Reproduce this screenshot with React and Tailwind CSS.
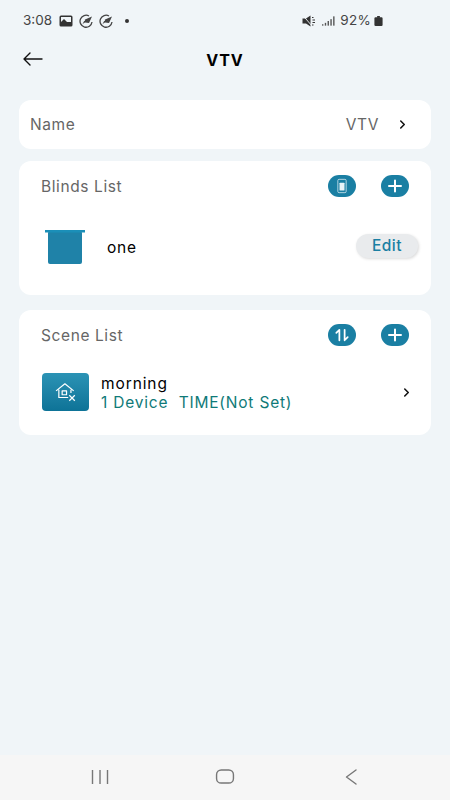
const F = { fontFamily: '"Inter", "Liberation Sans", sans-serif' };

function Chevron({ className }) {
  return (
    <svg viewBox="0 0 8 12" className={className} fill="none" stroke="#111" strokeWidth="1.8" strokeLinecap="round" strokeLinejoin="round">
      <path d="M2 2 L6 6 L2 10" />
    </svg>
  );
}

function Oval({ children }) {
  return (
    <div className="w-[28px] h-[22px] rounded-full bg-[#1a7fa3] flex items-center justify-center shrink-0">
      {children}
    </div>
  );
}

const Plus = () => (
  <Oval>
    <svg viewBox="0 0 16 16" className="w-[16px] h-[16px]" fill="none" stroke="#fff" strokeWidth="2" strokeLinecap="round">
      <path d="M8 2.5 V13.5 M2 8 H14" />
    </svg>
  </Oval>
);

const Remote = () => (
  <Oval>
    <svg viewBox="0 0 12 18" className="w-[10px] h-[16px]" fill="none">
      <rect x="1" y="1" width="10" height="16" rx="1.5" stroke="#cfe6ee" strokeWidth="1" />
      <rect x="3" y="5" width="6" height="9.5" rx="0.8" fill="#e8f4f8" />
    </svg>
  </Oval>
);

const Sort = () => (
  <Oval>
    <svg viewBox="0 0 18 16" className="w-[16px] h-[14px]" fill="none" stroke="#fff" strokeWidth="2" strokeLinecap="round" strokeLinejoin="round">
      <path d="M6 14 V2 L2.5 5.5 M12 2 V14 L15.5 10.5" />
    </svg>
  </Oval>
);

const Rocket = () => (
  <svg viewBox="0 0 14 14" className="w-[14px] h-[14px] ml-[6px]" fill="none">
    <path d="M10 2 A6 6 0 1 0 13 8" stroke="#444" strokeWidth="1.3" />
    <path d="M3.5 10 L6 5.5 L13 2.5 L10 9 L6 8.5 Z" fill="#444" />
    <path d="M2 6.5 H6" stroke="#f0f5f8" strokeWidth="0.8" />
  </svg>
);

export default function App() {
  return (
    <div className="w-[450px] h-[800px] bg-[#f0f5f8] flex flex-col overflow-hidden text-black" style={F}>
      <div className="h-[41px] pl-[23px] pr-[67px] flex items-center justify-between text-[13.5px] text-[#444]">
        <div className="flex items-center">
          <span>3:08</span>
          <svg viewBox="0 0 14 12" className="w-[14px] h-[12px] ml-[7px]">
            <rect x="0.5" y="0.5" width="13" height="11" rx="1.5" fill="#333" />
            <rect x="2" y="2" width="10" height="5" fill="#f0f5f8" />
            <path d="M2 7 L5 4 L8 7 Z" fill="#333" />
          </svg>
          <Rocket />
          <Rocket />
          <div className="w-[4px] h-[4px] rounded-full bg-[#333] ml-[12px]" />
        </div>
        <div className="flex items-center">
          <svg viewBox="0 0 14 12" className="w-[14px] h-[12px]">
            <path d="M0.5 3.5 H4 L8.5 0.5 V11.5 L4 8.5 H0.5 Z" fill="#333" />
            <path d="M1 0.5 L10 11" stroke="#f0f5f8" strokeWidth="0.9" />
            <path d="M10 2.5 L11.5 2.5 M10.5 5 H13 M10.5 7.5 H13 M10 10 H11.5" stroke="#333" strokeWidth="1.1" />
          </svg>
          <svg viewBox="0 0 14 10" className="w-[13px] h-[10px] ml-[6px]" fill="#555">
            <rect x="0" y="8.5" width="1.5" height="1.5" />
            <rect x="3" y="7" width="1.5" height="3" />
            <rect x="6" y="5" width="1.5" height="5" />
            <rect x="9" y="3" width="1.5" height="7" />
            <rect x="12" y="0" width="1.5" height="10" />
          </svg>
          <span className="ml-[5px] tracking-[0.3px]">92%</span>
          <svg viewBox="0 0 9 11" className="w-[9px] h-[10px] ml-[3px]" fill="#333">
            <rect x="0" y="1.5" width="9" height="9.5" rx="1.2" />
            <rect x="3" y="0" width="3" height="2" />
          </svg>
        </div>
      </div>

      <div className="h-[38px] relative flex items-center justify-center">
        <svg viewBox="0 0 20 14" className="absolute left-[23px] top-[11px] w-[20px] h-[14px]" fill="none" stroke="#111" strokeWidth="1.4" strokeLinecap="round" strokeLinejoin="round">
          <path d="M1 7 H19 M7 1 L1 7 L7 13" />
        </svg>
        <span className="font-bold text-[16px] tracking-[1px]">VTV</span>
      </div>

      <div className="flex flex-col px-[19px] pt-[21px] flex-1">
        <div className="h-[49px] bg-white rounded-[12px] flex items-center pl-[11px] pr-[25px] text-[#666] text-[15.5px] tracking-[0.6px]">
          <span>Name</span>
          <span className="ml-auto">VTV</span>
          <Chevron className="w-[7px] h-[11px] ml-[20px]" />
        </div>

        <div className="h-[134px] bg-white rounded-[12px] mt-[12px] flex flex-col pl-[22px] pr-[12px]">
          <div className="flex items-center pt-[14px] pr-[10px]">
            <span className="pt-[2px] leading-[20px] text-[#666] text-[15.5px] tracking-[0.6px]">Blinds List</span>
            <div className="ml-auto flex gap-[25px]">
              <Remote />
              <Plus />
            </div>
          </div>
          <div className="flex items-center mt-[33px]">
            <svg viewBox="0 0 40 34" className="w-[40px] h-[34px] ml-[4px]">
              <rect x="3" y="1" width="34" height="33" rx="2" fill="#1f82a8" />
              <rect x="0" y="0" width="40" height="2.5" fill="#1b8fb8" />
            </svg>
            <span className="ml-[22px] mt-[2px] text-[15.5px] tracking-[0.8px]">one</span>
            <div className="ml-auto mr-[1px] mb-[2px] w-[62px] h-[24px] rounded-full bg-[#e9ebed] shadow-[1px_1px_3px_rgba(0,0,0,0.15)] flex items-center justify-center text-[#1a7fa3] font-medium text-[15.5px] tracking-[0.5px]">
              Edit
            </div>
          </div>
        </div>

        <div className="h-[125px] bg-white rounded-[12px] mt-[15px] flex flex-col pl-[22px] pr-[22px]">
          <div className="flex items-center pt-[14px]">
            <span className="pt-[2px] leading-[20px] text-[#666] text-[15.5px] tracking-[0.6px]">Scene List</span>
            <div className="ml-auto flex gap-[25px]">
              <Sort />
              <Plus />
            </div>
          </div>
          <div className="flex items-center h-[38px] mt-[27px]">
            <div className="w-[47px] h-[38px] ml-[1px] rounded-[4px] bg-gradient-to-b from-[#2b93b5] to-[#0d7397] flex items-center justify-center">
              <svg viewBox="0 0 20 18" className="w-[22px] h-[20px]" fill="none" stroke="#fff" strokeWidth="1.1" strokeLinejoin="round">
                <path d="M1 8 L9 1.5 L17 8 M3.5 7 V14 H12 M14.5 7 V10" />
                <rect x="6.5" y="8" width="4" height="3.5" />
                <path d="M13 12 L18 17 M18 12 L13 17" />
              </svg>
            </div>
            <div className="flex flex-col ml-[12px] mt-[2px] leading-[19px]">
              <span className="text-[15.5px] tracking-[0.9px]">morning</span>
              <span className="text-[15.5px] text-[#0f7a78] whitespace-pre tracking-[0.8px]">1 Device  TIME(Not Set)</span>
            </div>
            <Chevron className="w-[7px] h-[11px] ml-auto mr-[-1px]" />
          </div>
        </div>
      </div>

      <div className="h-[45px] bg-[#f6f6f6] flex items-center pl-[91px] pr-[93px] pb-[2px] justify-between">
        <svg viewBox="0 0 18 16" className="w-[18px] h-[16px]" fill="none" stroke="#777" strokeWidth="1.4">
          <path d="M1.5 1 V15 M9 1 V15 M16.5 1 V15" />
        </svg>
        <svg viewBox="0 0 20 16" className="w-[20px] h-[15px] mr-[4px]" fill="none" stroke="#777" strokeWidth="1.5">
          <rect x="1" y="1" width="18" height="14" rx="5" />
        </svg>
        <svg viewBox="0 0 12 16" className="w-[12px] h-[16px]" fill="none" stroke="#777" strokeWidth="1.4" strokeLinecap="round" strokeLinejoin="round">
          <path d="M11 1 L1.5 8 L11 15" />
        </svg>
      </div>
    </div>
  );
}
